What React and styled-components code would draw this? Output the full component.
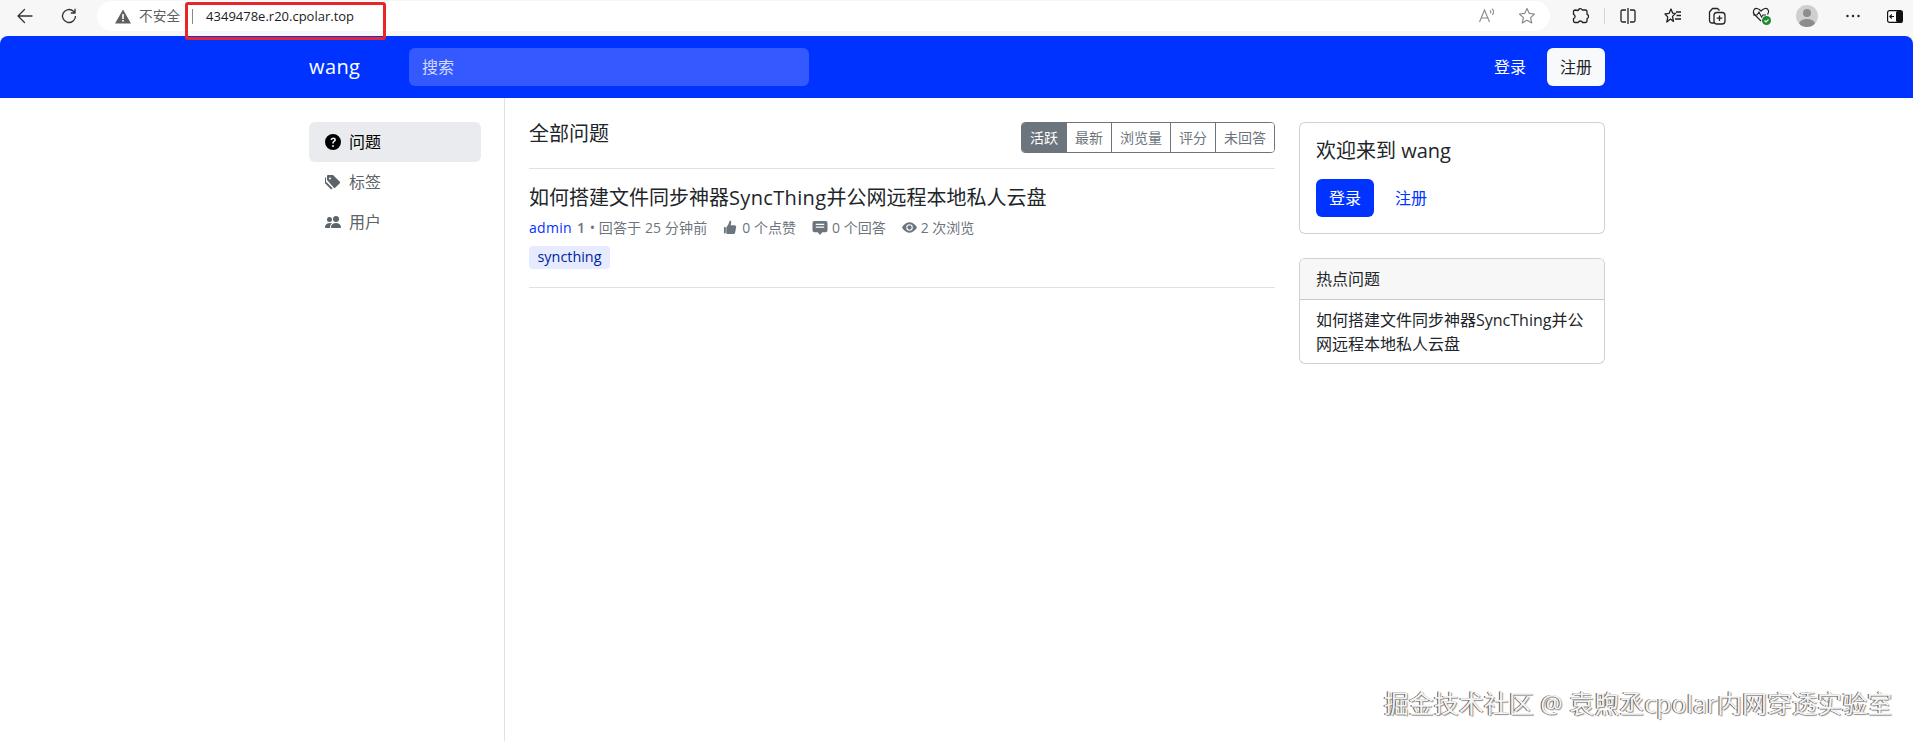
import React from 'react';
import styled, { createGlobalStyle } from 'styled-components';

const Global = createGlobalStyle`
  html, body { margin: 0; padding: 0; background: #fff; }
  body { font-family: "Open Sans", "Noto Sans CJK SC", sans-serif; color: #212529; font-size: 16px; line-height: 24px; overflow: hidden; }
  * { box-sizing: border-box; }
`;
const Page = styled.div`position: relative; width: 1913px; height: 741px; overflow: hidden; display: flex; flex-direction: column; background: #f7f7f7;`;
const BrowserBar = styled.div`height: 36px; flex: none; display: flex; align-items: center; background: #f7f7f7; padding: 0 0 0 13px;`;
const ToolBtn = styled.div`width: 24px; height: 24px; flex: none; display: flex; align-items: center; justify-content: center; margin-right: ${p => p.$mr || 0}px; position: relative; top: -2px;`;
const Omni = styled.div`width: 1453px; height: 30px; margin-top: -4px; margin-right: 18px; border-radius: 15px; background: #fff; display: flex; align-items: center; padding-left: 18px; flex: none;`;
const Insecure = styled.span`font-size: 13.7px; color: #5f5f5f; margin-left: 8px; white-space: nowrap; line-height: 16px;`;
const Divider = styled.span`width: 1px; height: 15px; background: #8a8a8a; margin: 0 13px 0 12px; flex: none;`;
const Url = styled.span`font-family: "Open Sans", sans-serif; font-size: 13px; color: #1c1c1c; line-height: 16px;`;
const OmniRight = styled.div`margin-left: auto; display: flex; align-items: center; gap: 22px; padding-right: 14px;`;
const Sep = styled.span`width: 1px; height: 16px; background: #d5d5d5; margin: -4px 11px 0 12px; flex: none;`;
const Avatar = styled.span`width: 22px; height: 22px; border-radius: 50%; background: #cfcfcf; overflow: hidden; display: block;`;
const RedBox = styled.div`position: absolute; left: 185px; top: 2px; width: 201px; height: 38px; border: 3px solid #e8262a; border-radius: 3px; pointer-events: none;`;

const Nav = styled.header`height: 62px; flex: none; background: #0033ff; border-radius: 8px 8px 0 0; display: flex; align-items: center; padding: 0 308px 0 309px; color: #fff;`;
const Brand = styled.div`font-size: 20px; font-weight: 500; letter-spacing: .4px; width: 100px; flex: none;`;
const Search = styled.div`width: 400px; height: 38px; background: #3359ff; border-radius: 6px; padding: 0 13px; display: flex; align-items: center; color: #d5dcff; font-size: 16px;`;
const NavRight = styled.div`margin-left: auto; display: flex; align-items: center; gap: 21px;`;
const NavLink = styled.span`color: #fff; font-size: 16px;`;
const SignUp = styled.div`width: 58px; height: 38px; background: #f8f9fa; color: #212529; border-radius: 6px; display: flex; align-items: center; justify-content: center; font-size: 16px;`;

const Body = styled.div`flex: 1; background: #fff; display: flex; padding-left: 309px; min-height: 0;`;
const Side = styled.aside`width: 196px; flex: none; border-right: 1px solid #dee2e6; padding-top: 24px; padding-right: 23px; display: flex; flex-direction: column;`;
const SideItem = styled.div`height: 40px; border-radius: 6px; padding: 0 16px 1px; display: flex; align-items: center; gap: 8px; background: ${p => p.$active ? '#e9ebee' : 'transparent'}; color: ${p => p.$active ? '#000' : '#5c6369'}; font-size: 16px; svg { flex: none; }`;
const Main = styled.main`width: 746px; flex: none; margin-left: 24px; padding-top: 24px;`;
const HeadRow = styled.div`height: 47px; display: flex; justify-content: space-between; align-items: flex-start; border-bottom: 1px solid #dee2e6;`;
const H = styled.h5`margin: 0; font-size: 20px; font-weight: 400; line-height: 24px;`;
const Tabs = styled.div`display: flex; height: 31px; border: 1px solid #6c757d; border-radius: 4px; overflow: hidden;`;
const Tab = styled.div`height: 100%; padding: 0 8px; font-size: 14px; display: flex; align-items: center; color: ${p => p.$active ? '#fff' : '#6c757d'}; background: ${p => p.$active ? '#6c757d' : '#fff'}; & + & { border-left: 1px solid #6c757d; }`;
const Item = styled.article`padding: 17px 0 0; height: 119px; border-bottom: 1px solid #dee2e6;`;
const ItemTitle = styled.div`font-size: 20px; line-height: 24px; color: #212529;`;
const Latin = styled.span`letter-spacing: .35px;`;
const Meta = styled.div`margin-top: 7px; height: 21px; display: flex; align-items: center; font-size: 14px; line-height: 21px; color: #6c757d; white-space: nowrap;`;
const Author = styled.span`color: #0033ff; font-size: 14px; letter-spacing: .3px;`;
const Score = styled.span`font-weight: 600; margin-left: 5px; font-size: 14px;`;
const Answered = styled.span`letter-spacing: .12px; margin-left: 1px;`;
const Stat = styled.span`display: inline-flex; align-items: center; gap: 4px; margin-left: 16px;`;
const TagRow = styled.div`margin-top: 8px; display: flex;`;
const TagChip = styled.span`height: 23px; padding: 0 8.5px; background: #e6ebff; color: #001f99; border-radius: 4px; font-size: 14.4px; line-height: 21px;`;
const Right = styled.aside`width: 306px; flex: none; margin-left: 24px; padding-top: 24px; display: flex; flex-direction: column; gap: 24px;`;
const Card = styled.section`border: 1px solid rgba(0,0,0,.18); border-radius: 6px; overflow: hidden; background: #fff;`;
const CardBody = styled.div`padding: 16px;`;
const CardTitle = styled.div`font-size: 20px; line-height: 24px; margin-bottom: 16px;`;
const Actions = styled.div`display: flex; align-items: center; gap: 21px;`;
const Primary = styled.div`width: 58px; height: 38px; background: #0033ff; color: #fff; border-radius: 6px; display: flex; align-items: center; justify-content: center; font-size: 16px;`;
const PlainLink = styled.span`color: #0033ff; font-size: 16px;`;
const CardHead = styled.div`height: 41px; background: #f7f7f7; border-bottom: 1px solid rgba(0,0,0,.18); padding: 0 16px; display: flex; align-items: center; font-size: 16px;`;
const ListLine = styled.div`padding: 8px 16px 7px; font-size: 16px; line-height: 24px; color: #212529;`;
const Watermark = styled.div`position: absolute; right: 21px; bottom: 23px; font-size: 25px; line-height: 30px; color: #f4f4f4; white-space: nowrap; text-shadow: -1px -.5px .6px #555, 1px 1px 1px #909090;`;

const Question = () => <svg width="16" height="16" viewBox="0 0 16 16" fill="#000"><path d="M16 8A8 8 0 1 1 0 8a8 8 0 0 1 16 0zM5.5 5.9h1.6c.1-.6.5-1 1.1-1 .6 0 1 .4 1 .9 0 .5-.2.7-.8 1.2-.7.5-1.2 1-1.1 2v.4h1.6v-.3c0-.6.2-.8.8-1.3.7-.5 1.2-1.1 1.2-2.1 0-1.4-1.1-2.2-2.6-2.2-1.6 0-2.7.9-2.8 2.4zM8 13a1 1 0 1 0 0-2 1 1 0 0 0 0 2z"/></svg>;
const Tags = () => <svg width="16" height="16" viewBox="0 0 16 16" fill="#5c6369"><path d="M2 2a1 1 0 0 1 1-1h4.6a1 1 0 0 1 .7.3l6.5 6.5a1 1 0 0 1 0 1.4l-4.6 4.6a1 1 0 0 1-1.4 0L2.3 6.3A1 1 0 0 1 2 5.6V2zm3 3.5a1 1 0 1 0 0-2 1 1 0 0 0 0 2z"/><path d="M1.3 8 7.6 14.3l-.6.6a1 1 0 0 1-1.4 0L.3 9.6A1 1 0 0 1 0 8.9V4.3a1 1 0 0 1 1-1v4.7z"/></svg>;
const People = () => <svg width="16" height="16" viewBox="0 0 16 16" fill="#5c6369"><path d="M7 14s-1 0-1-1 1-4 5-4 5 3 5 4-1 1-1 1H7zm4-6a3 3 0 1 0 0-6 3 3 0 0 0 0 6z"/><path d="M5.2 14A2.2 2.2 0 0 1 5 13c0-1.4.7-2.8 2-3.7A6.5 6.5 0 0 0 5 9c-4 0-5 3-5 4s1 1 1 1h4.2zM4.5 8a2.5 2.5 0 1 0 0-5 2.5 2.5 0 0 0 0 5z"/></svg>;
const Thumb = () => <svg width="15" height="15" viewBox="0 0 16 16" fill="#6c757d"><path d="M6.9 1c.9-.4 1.9.2 1.9 1.2 0 1-.3 2.3-.7 3.3h4.2c1.3 0 2 1.1 1.7 2.2l-1.100 5.800c-.2 1-1 1.500-2 1.500H5c-.8 0-1.500-.4-1.500-1.400V8.200c0-.7.4-1.100.9-1.600C5.500 5.300 6.500 3 6.900 1z"/><rect x="1" y="7.500" width="2" height="7" rx=".8"/></svg>;
const Chat = () => <svg width="16" height="15" viewBox="0 0 16 16" fill="#6c757d"><path d="M2 1h12a2 2 0 0 1 2 2v8a2 2 0 0 1-2 2h-3.500L8 16l-2.500-3H2a2 2 0 0 1-2-2V3a2 2 0 0 1 2-2zm1.500 3v1.300h9V4h-9zm0 3v1.300h9V7h-9z"/></svg>;
const Eye = () => <svg width="15" height="15" viewBox="0 0 16 16" fill="#6c757d"><path fillRule="evenodd" d="M16 8s-3-5.500-8-5.500S0 8 0 8s3 5.500 8 5.500S16 8 16 8zM8 11.500a3.500 3.500 0 1 1 0-7 3.500 3.500 0 0 1 0 7z"/><circle cx="8" cy="8" r="2.300"/></svg>;

export default function App() {
  return (
    <Page>
      <Global />
      <BrowserBar>
        <ToolBtn $mr={20}>
          <svg width="18" height="18" viewBox="0 0 18 18"><path d="M16 9H2M8.500 2.500 2 9l6.500 6.500" fill="none" stroke="#333" strokeWidth="1.300" strokeLinecap="round" strokeLinejoin="round" /></svg>
        </ToolBtn>
        <ToolBtn $mr={16}>
          <svg width="18" height="18" viewBox="0 0 18 18"><path d="M15.500 9a6.500 6.500 0 1 1-2-4.700L15 6M15 1.800V6h-4.200" fill="none" stroke="#333" strokeWidth="1.300" strokeLinejoin="round" /></svg>
        </ToolBtn>
        <Omni>
          <svg width="16" height="15" viewBox="0 0 16 15"><path d="M8 .5 16 14.500H0z" fill="#606060" strokeLinejoin="round" /><rect x="7.200" y="5" width="1.600" height="5" fill="#fff" /><rect x="7.200" y="11" width="1.600" height="1.600" fill="#fff" /></svg>
          <Insecure>不安全</Insecure>
          <Divider />
          <Url>4349478e.r20.cpolar.top</Url>
          <OmniRight>
            <svg width="18" height="18" viewBox="0 0 18 18" fill="none" stroke="#8a8a8a" strokeWidth="1.100"><path d="M1.500 15 6.500 3l5 12M3.300 11h6.400M12 3.500c1 .7 1 2 .2 2.800M14 1.800c2 1.500 2 4.500.3 6" /></svg>
            <svg width="18" height="18" viewBox="0 0 18 18" fill="none" stroke="#8a8a8a" strokeWidth="1.200" strokeLinejoin="round"><path d="m9 1.500 2.300 4.900 5.200.6-3.900 3.600 1.100 5.300L9 13.200 4.300 15.900l1.100-5.300L1.500 7l5.200-.6z" /></svg>
          </OmniRight>
        </Omni>
        <ToolBtn>
          <svg width="18" height="18" viewBox="0 0 18 18" fill="none" stroke="#222" strokeWidth="1.300" strokeLinejoin="round"><path d="M7 3.500a2.300 2.300 0 0 1 4.300-.5h3.200a1.500 1.500 0 0 1 1.500 1.500v2.800a2.200 2.200 0 0 1 0 4.200v2.500a1.500 1.500 0 0 1-1.500 1.500h-3a2.300 2.300 0 0 0-4.300 0H4a1.500 1.500 0 0 1-1.500-1.500v-2.500a2.200 2.200 0 0 0 0-4.200V4.500A1.500 1.500 0 0 1 4 3z" /></svg>
        </ToolBtn>
        <Sep />
        <ToolBtn $mr={21}>
          <svg width="18" height="18" viewBox="0 0 18 18" fill="none" stroke="#222" strokeWidth="1.300"><path d="M7 3H3.500A1.500 1.500 0 0 0 2 4.500v9A1.500 1.500 0 0 0 3.500 15H7M11 3h3.500A1.500 1.500 0 0 1 16 4.500v9a1.500 1.500 0 0 1-1.500 1.500H11M9 1v16" /></svg>
        </ToolBtn>
        <ToolBtn $mr={20}>
          <svg width="18" height="18" viewBox="0 0 18 18" fill="none" stroke="#222" strokeWidth="1.300" strokeLinejoin="round"><path d="m7 2 1.700 4.200 2.800.2-3 3 1 5-3-2.300-3.700 3 1-5L1 7l4-.6zM12 5h5M12.500 8.500H17M11 12h6" /></svg>
        </ToolBtn>
        <ToolBtn $mr={21}>
          <svg width="20" height="20" viewBox="0 0 20 20" fill="none" stroke="#222" strokeWidth="1.300" strokeLinejoin="round"><path d="M7 17H5a2.500 2.500 0 0 1-2.500-2.500V6l3-3.500h5l2 2" /><rect x="7" y="6.500" width="11" height="11.500" rx="3" /><path d="M12.500 9.500v5.500M9.700 12.200h5.600" /></svg>
        </ToolBtn>
        <ToolBtn $mr={21}>
          <svg width="22" height="22" viewBox="0 0 22 22"><path d="M10 16 3.500 9.500C1 7 3 3 6 3.500c2 .3 3 1.500 4 2.500 1-1 2-2.200 4-2.500 3-.5 5 3 2.500 6" fill="none" stroke="#222" strokeWidth="1.200" /><path d="M2 10h4l2-3 2.500 5 1.500-2h3" fill="none" stroke="#222" strokeWidth="1.100" /><circle cx="15.500" cy="15.500" r="4.500" fill="#1b8a2e" /><path d="m13.500 15.500 1.500 1.500 2.500-2.500" fill="none" stroke="#fff" strokeWidth="1.100" /></svg>
        </ToolBtn>
        <ToolBtn $mr={22}>
          <Avatar>
            <svg width="22" height="22" viewBox="0 0 22 22"><circle cx="11" cy="8" r="4" fill="#8c8c8c" /><ellipse cx="11" cy="19" rx="8" ry="5" fill="#8c8c8c" /></svg>
          </Avatar>
        </ToolBtn>
        <ToolBtn $mr={18}>
          <svg width="16" height="4" viewBox="0 0 16 4" fill="#222"><circle cx="2.500" cy="2" r="1.200" /><circle cx="8" cy="2" r="1.200" /><circle cx="13.500" cy="2" r="1.200" /></svg>
        </ToolBtn>
        <ToolBtn>
          <svg width="16" height="13" viewBox="0 0 16 13"><rect x=".6" y=".6" width="14.800" height="11.800" rx="2" fill="#fff" stroke="#111" strokeWidth="1.200" /><rect x="9" y="1" width="6.500" height="11" rx="1.500" fill="#111" /><path d="M7 6.500H3M4.800 4.500l-2 2 2 2" fill="none" stroke="#111" strokeWidth="1.100" /></svg>
        </ToolBtn>
      </BrowserBar>
      <RedBox />
      <Nav>
        <Brand>wang</Brand>
        <Search>搜索</Search>
        <NavRight>
          <NavLink>登录</NavLink>
          <SignUp>注册</SignUp>
        </NavRight>
      </Nav>
      <Body>
        <Side>
          <SideItem $active><Question />问题</SideItem>
          <SideItem><Tags />标签</SideItem>
          <SideItem><People />用户</SideItem>
        </Side>
        <Main>
          <HeadRow>
            <H>全部问题</H>
            <Tabs>
              <Tab $active>活跃</Tab>
              <Tab>最新</Tab>
              <Tab>浏览量</Tab>
              <Tab>评分</Tab>
              <Tab>未回答</Tab>
            </Tabs>
          </HeadRow>
          <Item>
            <ItemTitle>如何搭建文件同步神器<Latin>SyncThing</Latin>并公网远程本地私人云盘</ItemTitle>
            <Meta>
              <Author>admin</Author><Score>1</Score>
              <Answered>&nbsp;• 回答于 25 分钟前</Answered>
              <Stat><Thumb />0 个点赞</Stat>
              <Stat><Chat />0 个回答</Stat>
              <Stat><Eye />2 次浏览</Stat>
            </Meta>
            <TagRow><TagChip>syncthing</TagChip></TagRow>
          </Item>
        </Main>
        <Right>
          <Card>
            <CardBody>
              <CardTitle>欢迎来到 wang</CardTitle>
              <Actions>
                <Primary>登录</Primary>
                <PlainLink>注册</PlainLink>
              </Actions>
            </CardBody>
          </Card>
          <Card>
            <CardHead>热点问题</CardHead>
            <ListLine>如何搭建文件同步神器SyncThing并公网远程本地私人云盘</ListLine>
          </Card>
        </Right>
      </Body>
      <Watermark>掘金技术社区 @ 袁煦丞cpolar内网穿透实验室</Watermark>
    </Page>
  );
}
